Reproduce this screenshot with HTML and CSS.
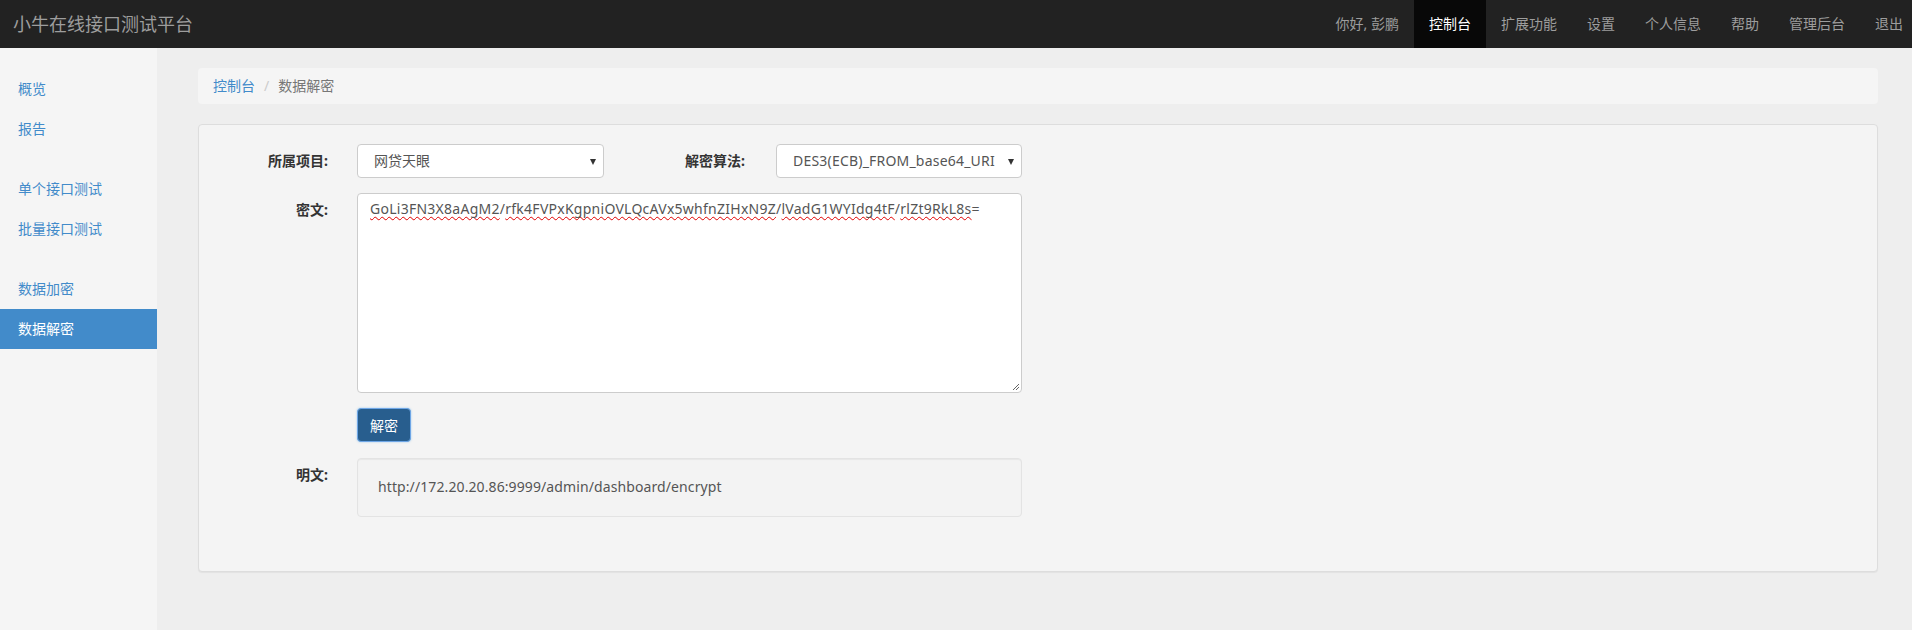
FILE: index.html
```html
<!DOCTYPE html>
<html lang="zh-CN">
<head>
<meta charset="utf-8">
<title>小牛在线接口测试平台</title>
<link rel="stylesheet" href="styles.css">
</head>
<body>
<header class="navbar">
  <a class="brand" href="#">小牛在线接口测试平台</a>
  <ul class="nav-right">
    <li class="nav-text">你好, 彭鹏</li>
    <li class="active"><a href="#">控制台</a></li>
    <li><a href="#">扩展功能</a></li>
    <li><a href="#">设置</a></li>
    <li><a href="#">个人信息</a></li>
    <li><a href="#">帮助</a></li>
    <li><a href="#">管理后台</a></li>
    <li><a href="#">退出</a></li>
  </ul>
</header>
<div class="layout">
  <aside class="sidebar">
    <ul class="side-group">
      <li><a href="#">概览</a></li>
      <li><a href="#">报告</a></li>
    </ul>
    <ul class="side-group">
      <li><a href="#">单个接口测试</a></li>
      <li><a href="#">批量接口测试</a></li>
    </ul>
    <ul class="side-group">
      <li><a href="#">数据加密</a></li>
      <li class="active"><a href="#">数据解密</a></li>
    </ul>
  </aside>
  <main class="main">
    <ol class="breadcrumb">
      <li><a href="#">控制台</a></li>
      <li class="sep">/</li>
      <li class="current">数据解密</li>
    </ol>
    <section class="panel">
      <div class="form-row">
        <label class="label label-first">所属项目:</label>
        <div class="select select-project">网贷天眼<span class="caret"></span></div>
        <label class="label label-second">解密算法:</label>
        <div class="select select-algo">DES3(ECB)_FROM_base64_URI<span class="caret"></span></div>
      </div>
      <div class="form-row">
        <label class="label label-first">密文:</label>
        <div class="textarea"><span class="typo">GoLi3FN3X8aAgM2</span>/<span class="typo">rfk4FVPxKgpniOVLQcAVx5whfnZIHxN9Z</span>/<span class="typo">lVadG1WYIdg4tF</span>/<span class="typo">rlZt9RkL8s</span>=<svg class="grip" width="8" height="8" viewBox="0 0 8 8"><path d="M7 1 L1 7 M7 4 L4 7" stroke="#666" stroke-width="1" fill="none"/></svg></div>
      </div>
      <div class="form-row row-button">
        <div class="label-space"></div>
        <button class="btn" type="button">解密</button>
      </div>
      <div class="form-row row-last">
        <label class="label label-first">明文:</label>
        <div class="well">http://172.20.20.86:9999/admin/dashboard/encrypt</div>
      </div>
    </section>
  </main>
</div>
</body>
</html>
```
FILE: styles.css
```css
* { box-sizing: border-box; }
html, body { margin: 0; padding: 0; }
body {
  font-family: "Noto Sans", "Noto Sans CJK SC", sans-serif;
  font-size: 14px;
  line-height: 20px;
  color: #333;
  background: #eeeeee;
  overflow: hidden;
}
a { text-decoration: none; }
ul, ol { list-style: none; margin: 0; padding: 0; }

.navbar {
  height: 48px;
  background: #222222;
  display: flex;
  justify-content: space-between;
  overflow: hidden;
}
.brand {
  padding-left: 13px;
  font-size: 18px;
  line-height: 48px;
  color: #9d9d9d;
}
.nav-right {
  display: flex;
  margin-right: -6px;
}
.nav-right li { line-height: 48px; }
.nav-right a, .nav-text {
  display: block;
  padding: 0 15px;
  color: #9d9d9d;
}
.nav-right .active a {
  background: #080808;
  color: #ffffff;
}

.layout {
  display: flex;
  min-height: calc(100vh - 48px);
}
.sidebar {
  width: 157px;
  flex: none;
  background: #f5f5f5;
  padding-top: 21px;
}
.side-group { margin-bottom: 20px; }
.side-group a {
  display: block;
  padding: 10px 18px;
  color: #428bca;
}
.side-group .active a {
  background: #428bca;
  color: #fff;
}

.main {
  flex: 1;
  padding: 20px 34px 0 41px;
}
.breadcrumb {
  display: flex;
  background: #f5f5f5;
  border-radius: 4px;
  padding: 8px 15px;
  margin: 0 0 20px;
}
.breadcrumb a { color: #428bca; }
.breadcrumb .sep { color: #cccccc; padding: 0 9px; }
.breadcrumb .current { color: #777; }

.panel {
  background: #f4f4f4;
  border: 1px solid #dddddd;
  border-radius: 4px;
  box-shadow: 0 1px 1px rgba(0,0,0,.05);
  padding: 19px 0 54px 0;
}
.form-row {
  display: flex;
  align-items: flex-start;
  margin-bottom: 15px;
}
.row-button { margin-bottom: 16px; }
.row-last { margin-bottom: 0; }
.label {
  font-weight: bold;
  text-align: right;
  padding-top: 7px;
  color: #333;
}
.label-first { width: 129px; margin-right: 29px; }
.label-second { width: 141px; margin-right: 31px; }
.label-space { width: 158px; flex: none; }

.select {
  position: relative;
  height: 34px;
  background: #fff;
  border: 1px solid #cccccc;
  border-radius: 4px;
  padding: 6px 16px;
  color: #555;
}
.select-project { width: 247px; }
.select-algo { width: 246px; padding-left: 16px; letter-spacing: 0.2px; }
.caret {
  position: absolute;
  right: 7px;
  top: 14px;
  width: 0;
  height: 0;
  border-left: 3.5px solid transparent;
  border-right: 3.5px solid transparent;
  border-top: 6px solid #333;
}

.textarea {
  position: relative;
  width: 665px;
  height: 200px;
  background: #fff;
  border: 1px solid #cccccc;
  border-radius: 4px;
  padding: 5px 12px;
  color: #555;
  white-space: nowrap;
  letter-spacing: 0.26px;
}
.typo {
  text-decoration: underline wavy #e00000;
  text-decoration-thickness: 1px;
  text-underline-offset: 2px;
  text-decoration-skip-ink: none;
}
.grip {
  position: absolute;
  right: 1px;
  bottom: 1px;
}

.btn {
  width: 54px;
  height: 34px;
  padding: 0;
  font-family: inherit;
  font-size: 14px;
  color: #fff;
  background: #285e8e;
  border: 1px solid #6ea6e6;
  border-radius: 4px;
  box-shadow: 0 0 2px rgba(102,175,233,.7);
}

.well {
  width: 665px;
  height: 59px;
  background: #f3f3f3;
  border: 1px solid #e3e3e3;
  border-radius: 4px;
  box-shadow: inset 0 1px 1px rgba(0,0,0,.05);
  padding: 18px 20px;
  color: #555;
  letter-spacing: 0.1px;
}
```
